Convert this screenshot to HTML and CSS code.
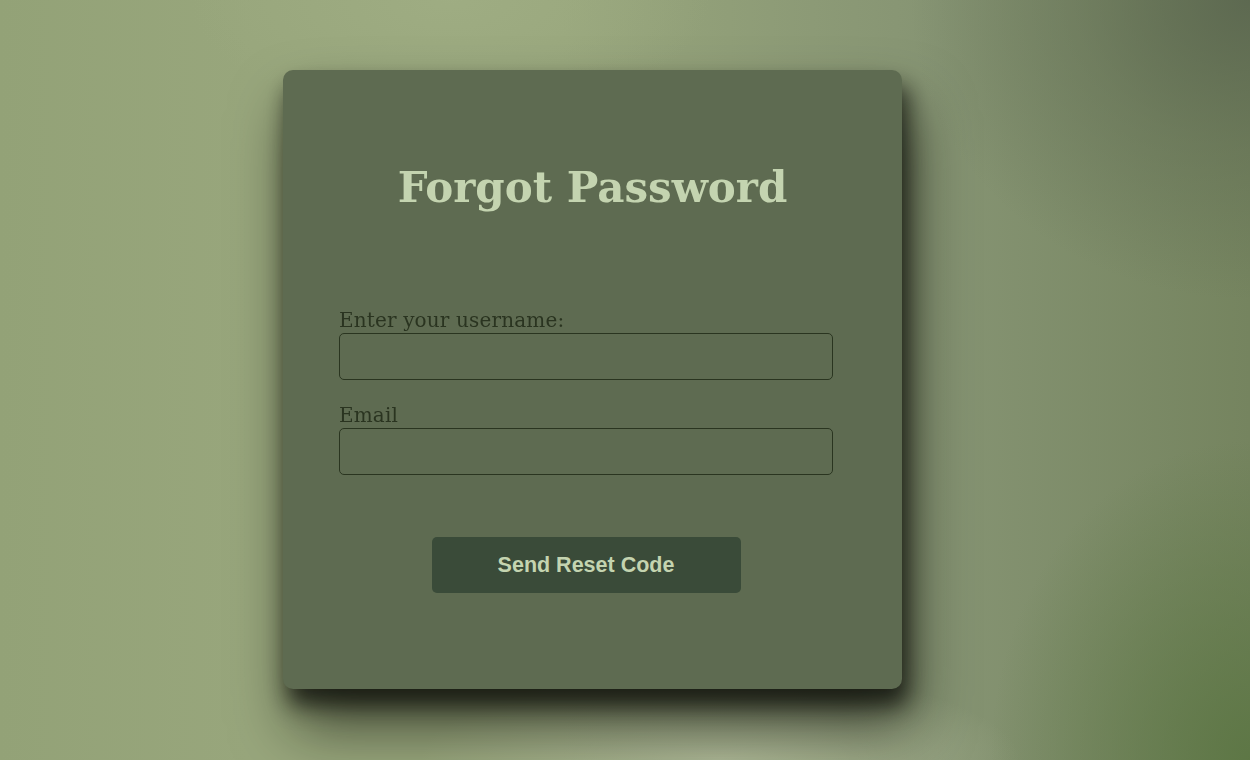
FILE: index.html
```
<!DOCTYPE html>
<html>
<head>
<meta charset="utf-8">
<link rel="stylesheet" href="styles.css">
</head>
<body>
<div class="bg"></div>
<main class="page">
  <section class="card">
    <h1 class="title">Forgot Password</h1>
    <form class="form">
      <label class="label" for="u">Enter your username:</label>
      <input class="field" id="u" type="text">
      <label class="label label-2" for="e">Email</label>
      <input class="field" id="e" type="email">
      <div class="actions">
        <button class="btn" type="button">Send Reset Code</button>
      </div>
    </form>
  </section>
</main>
</body>
</html>
```
FILE: styles.css
```
html, body {
  margin: 0;
  padding: 0;
  width: 100%;
  height: 100%;
  overflow: hidden;
}
body {
  background: #93a277;
}
.bg {
  position: fixed;
  inset: 0;
  background:
    radial-gradient(ellipse 340px 300px at 1250px 0px, rgba(92,104,80,0.95), rgba(92,104,80,0.4) 50%, rgba(92,104,80,0) 100%),
    radial-gradient(ellipse 260px 320px at 1250px 760px, rgba(92,118,68,0.95), rgba(92,118,68,0) 100%),
    radial-gradient(ellipse 300px 90px at 720px 760px, rgba(178,188,155,0.9), rgba(178,188,155,0) 100%),
    radial-gradient(ellipse 260px 120px at 450px 0px, rgba(160,174,132,0.8), rgba(160,174,132,0) 100%),
    linear-gradient(90deg, #93a277 0%, #98a67c 20%, #98a67c 45%, #869473 75%, #75845f 100%);
}
.page {
  position: relative;
  display: flex;
  justify-content: center;
  padding-top: 70px;
  padding-right: 65px;
}
.card {
  width: 619px;
  height: 619px;
  box-sizing: border-box;
  background: #5e6b51;
  border-radius: 10px;
  box-shadow: 5px 16px 22px rgba(12, 14, 8, 0.75), 10px 38px 60px rgba(12, 14, 8, 0.6);
  padding: 90px 69px 0 56px;
}
.title {
  margin: 0 0 0 13px;
  text-align: center;
  font-family: "DejaVu Serif", serif;
  font-weight: bold;
  font-size: 42px;
  line-height: 56px;
  color: #c4d4b0;
}
.form {
  display: flex;
  flex-direction: column;
  margin-top: 92px;
}
.label {
  font-family: "DejaVu Serif", serif;
  font-size: 20px;
  line-height: 25px;
  letter-spacing: 0.15px;
  color: #2a3420;
}
.label-2 {
  margin-top: 23px;
}
.field {
  box-sizing: border-box;
  width: 494px;
  height: 47px;
  margin: 0;
  background: transparent;
  border: 1px solid #2a3520;
  border-radius: 5px;
}
.actions {
  display: flex;
  justify-content: center;
  margin-top: 62px;
}
.btn {
  width: 309px;
  height: 56px;
  border: none;
  border-radius: 5px;
  background: #3a4b39;
  color: #c4d4b0;
  font-family: "Liberation Sans", Arial, sans-serif;
  font-weight: bold;
  font-size: 21.5px;
}
```
